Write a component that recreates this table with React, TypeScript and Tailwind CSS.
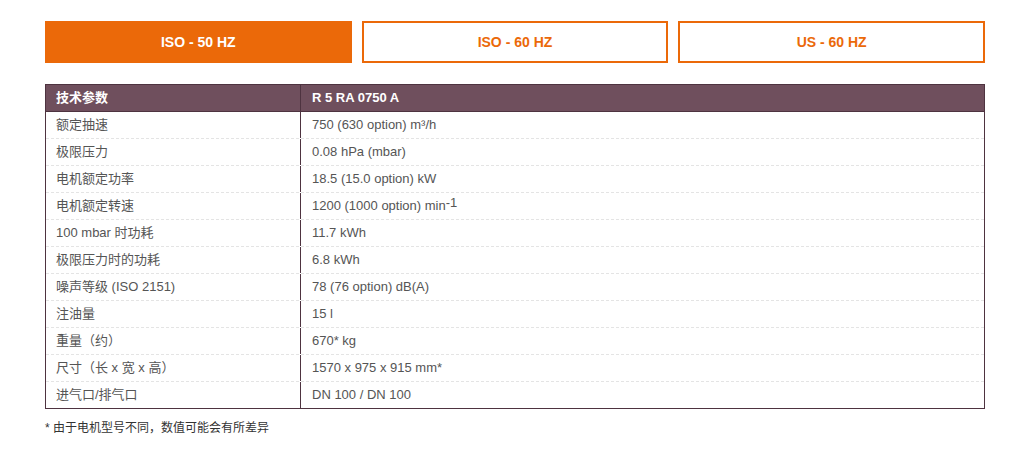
const rows: [string, React.ReactNode][] = [
  ["额定抽速", "750 (630 option) m³/h"],
  ["极限压力", "0.08 hPa (mbar)"],
  ["电机额定功率", "18.5 (15.0 option) kW"],
  [
    "电机额定转速",
    <>
      1200 (1000 option) min<sup className="relative -top-[3px] text-[13px]">-1</sup>
    </>,
  ],
  ["100 mbar 时功耗", "11.7 kWh"],
  ["极限压力时的功耗", "6.8 kWh"],
  ["噪声等级 (ISO 2151)", "78 (76 option) dB(A)"],
  ["注油量", "15 l"],
  ["重量（约）", "670* kg"],
  ["尺寸（长 x 宽 x 高）", "1570 x 975 x 915 mm*"],
  ["进气口/排气口", "DN 100 / DN 100"],
];

const tabs = ["ISO - 50 HZ", "ISO - 60 HZ", "US - 60 HZ"];

export default function App() {
  return (
    <div
      className="min-h-[462px] bg-white"
      style={{ fontFamily: '"Liberation Sans", Arial, "Noto Sans CJK SC", sans-serif' }}
    >
      <div className="ml-[45px] w-[940px] pt-[21px]">
        {/* 切换标签 */}
        <div className="grid grid-cols-3 gap-[10px]">
          {tabs.map((t, i) => (
            <div
              key={t}
              className={
                i === 0
                  ? "flex h-[42px] items-center justify-center bg-[#eb6909] text-[14px] font-bold text-white"
                  : "flex h-[42px] items-center justify-center border-2 border-[#eb6909] text-[14px] font-bold text-[#eb6909]"
              }
            >
              {t}
            </div>
          ))}
        </div>

        {/* 参数表 */}
        <div className="mt-[21px] border border-[#4e3340] text-[13px] text-[#555]">
          <div className="flex h-[26px] bg-[#6f4f5d] font-bold text-white">
            <div className="flex w-[255px] items-center border-r border-[#4e3340] pl-[10px]">技术参数</div>
            <div className="flex flex-1 items-center pl-[11px]">R 5 RA 0750 A</div>
          </div>
          {rows.map(([k, v], i) => (
            <div
              key={k}
              className={
                i === 0
                  ? "flex h-[27px] border-t border-[#4e3340]"
                  : "flex h-[27px] border-t border-dashed border-[#e4e4e4]"
              }
            >
              <div className="flex w-[255px] items-center border-r border-[#4e3340] pl-[10px]">{k}</div>
              <div className="flex flex-1 items-center pl-[11px]">{v}</div>
            </div>
          ))}
        </div>

        <p className="mt-[10px] text-[12px] text-[#333]">* 由于电机型号不同，数值可能会有所差异</p>
      </div>
    </div>
  );
}
